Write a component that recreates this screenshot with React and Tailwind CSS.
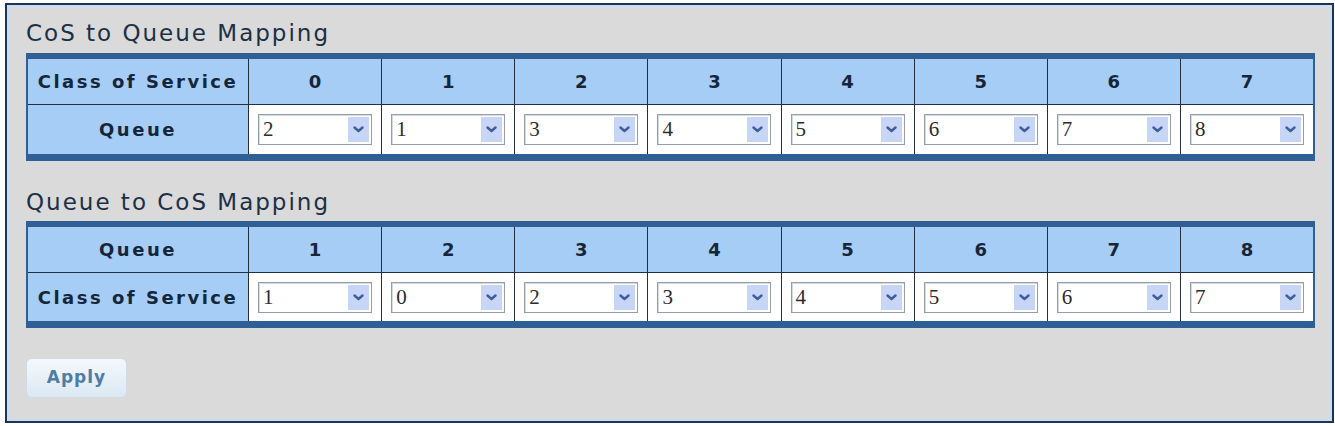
import React from 'react';

const cosToQueue = [
  { head: '0', value: '2' },
  { head: '1', value: '1' },
  { head: '2', value: '3' },
  { head: '3', value: '4' },
  { head: '4', value: '5' },
  { head: '5', value: '6' },
  { head: '6', value: '7' },
  { head: '7', value: '8' },
];

const queueToCos = [
  { head: '1', value: '1' },
  { head: '2', value: '0' },
  { head: '3', value: '2' },
  { head: '4', value: '3' },
  { head: '5', value: '4' },
  { head: '6', value: '5' },
  { head: '7', value: '6' },
  { head: '8', value: '7' },
];

const FakeSelect = ({ value }) => (
  <div className="w-[114px] h-[31px] border border-[#949ea8] bg-white flex items-center justify-between pl-[4px] pr-[2px] shadow-[inset_1px_1px_0_#d6dce2]">
    <span className="text-[21px] leading-none text-[#2c2c2c] font-['Liberation_Serif',serif]">{value}</span>
    <span className="w-[21px] h-[25px] bg-[#c7d5f6] flex items-center justify-center">
      <svg width="11" height="7" viewBox="0 0 11 7">
        <path d="M1.5 1.5 L5.5 5 L9.5 1.5" fill="none" stroke="#3e5f9c" strokeWidth="2.4" strokeLinecap="round" strokeLinejoin="round" />
      </svg>
    </span>
  </div>
);

const MappingTable = ({ rowHead, rowLabel, cols, dataHeight }) => (
  <div className="border-t-[6px] border-b-[7px] border-x-2 border-[#2f5f95]">
    <div className="grid grid-cols-[220px_repeat(8,1fr)] h-[46px] bg-[#a6cdf6] border-b border-[#22303f]">
      <div className="flex items-center justify-center font-bold text-[18px] tracking-[2.5px] text-[#15263a]">
        {rowHead}
      </div>
      {cols.map((c) => (
        <div key={c.head} className="border-l border-[#22303f] flex items-center justify-center font-bold text-[18px] text-[#15263a]">
          {c.head}
        </div>
      ))}
    </div>
    <div className={`grid grid-cols-[220px_repeat(8,1fr)] bg-white ${dataHeight}`}>
      <div className="bg-[#a6cdf6] flex items-center justify-center font-bold text-[18px] tracking-[2.5px] text-[#15263a]">
        {rowLabel}
      </div>
      {cols.map((c) => (
        <div key={c.head} className="border-l border-[#22303f] flex items-center justify-center">
          <FakeSelect value={c.value} />
        </div>
      ))}
    </div>
  </div>
);

export default function App() {
  return (
    <div className="bg-white w-[1335px] h-[426px] pt-[3px] pl-[5px] font-['DejaVu_Sans',Verdana,sans-serif]">
      <div className="w-[1329px] h-[420px] border-2 border-[#1b3553]">
        <div className="h-full border-2 border-[#c8def0] bg-[#dadada] pl-[17px] pr-[15px] pt-[13px]">
          <h2 className="text-[23px] leading-[26px] tracking-[2px] text-[#1c3045]">CoS to Queue Mapping</h2>
          <div className="mt-[7px]">
            <MappingTable rowHead="Class of Service" rowLabel="Queue" cols={cosToQueue} dataHeight="h-[49px]" />
          </div>

          <h2 className="mt-[28px] text-[23px] leading-[26px] tracking-[2px] text-[#1c3045]">Queue to CoS Mapping</h2>
          <div className="mt-[6px]">
            <MappingTable rowHead="Queue" rowLabel="Class of Service" cols={queueToCos} dataHeight="h-[48px]" />
          </div>

          <button className="mt-[30px] w-[101px] h-[40px] rounded-[6px] border border-[#d0dbe6] bg-gradient-to-b from-[#f4f8fc] to-[#dce8f3] text-[17px] font-bold tracking-[1px] text-[#4e7da3]">
            Apply
          </button>
        </div>
      </div>
    </div>
  );
}
